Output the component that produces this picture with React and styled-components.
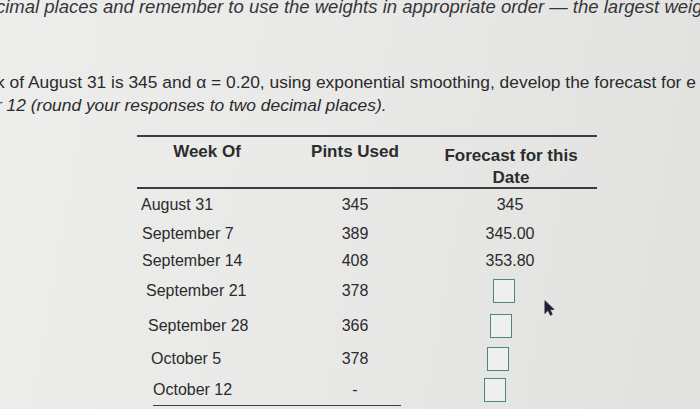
import styled, { createGlobalStyle } from 'styled-components';

const GlobalStyle = createGlobalStyle`
  html, body {
    margin: 0;
    padding: 0;
    width: 700px;
    height: 409px;
    overflow: hidden;
  }
  body {
    font-family: "Liberation Sans", Arial, sans-serif;
    color: #2a2b2d;
  }
`;

const rows = [
  { week: 'August 31', pints: '345', forecast: '345', h: 31, indent: 4 },
  { week: 'September 7', pints: '389', forecast: '345.00', h: 28, indent: 5 },
  { week: 'September 14', pints: '408', forecast: '353.80', h: 25, indent: 5 },
  { week: 'September 21', pints: '378', box: 0, h: 35, indent: 9 },
  { week: 'September 28', pints: '366', box: -3, h: 35, indent: 11 },
  { week: 'October 5', pints: '378', box: -6, h: 32, indent: 14 },
  { week: 'October 12', pints: '-', box: -9, h: 30, indent: 16 },
];

const App = () => {
  return (
    <>
      <GlobalStyle />
      <Page>
        <TopLine>cimal places and remember to use the weights in appropriate order — the largest weigh</TopLine>
        <Question>
          <Line>k of August 31 is 345 and α = 0.20, using exponential smoothing, develop the forecast for e</Line>
          <Line italic>r 12 (round your responses to two decimal places).</Line>
        </Question>

        <Table>
          <HeadRow>
            <HeadCell>Week Of</HeadCell>
            <HeadCell>Pints Used</HeadCell>
            <HeadCell wide>Forecast for this<br />Date</HeadCell>
          </HeadRow>
          {rows.map((r) => (
            <Row key={r.week} h={r.h}>
              <WeekCell indent={r.indent}>{r.week}</WeekCell>
              <NumCell>{r.pints}</NumCell>
              <ForecastCell>
                {r.box !== undefined ? <AnswerBox shift={r.box} /> : r.forecast}
              </ForecastCell>
            </Row>
          ))}
          <BottomRule />
          <Cursor viewBox="0 0 12 18" width="11" height="18">
            <path d="M1 1 L1 15 L4.5 11.5 L7 17 L9 16 L6.6 10.6 L11 10.6 Z" fill="#1d2230" stroke="#1d2230" strokeWidth="0.8" strokeLinejoin="round" />
          </Cursor>
        </Table>
      </Page>
    </>
  );
};

export default App;

const Page = styled.div`
  width: 700px;
  height: 409px;
  overflow: hidden;
  background: linear-gradient(100deg, #ededeb 0%, #e9e9e7 45%, #e1e2df 100%);
`;

const TopLine = styled.div`
  font-size: 18.5px;
  font-style: italic;
  white-space: nowrap;
  margin-top: -4px;
  margin-left: -4px;
  line-height: 22px;
  color: #35363a;
`;

const Question = styled.div`
  margin-top: 53px;
  margin-left: -4px;
`;

const Line = styled.div`
  font-size: 17.4px;
  white-space: nowrap;
  line-height: 23px;
  font-style: ${(p) => (p.italic ? 'italic' : 'normal')};
`;

const Table = styled.div`
  position: relative;
  margin-top: 18px;
  margin-left: 137px;
  width: 460px;
  border-top: 2px solid #3c3d3f;
`;

const HeadRow = styled.div`
  display: grid;
  grid-template-columns: 140px 156px 164px;
  padding: 4px 0 0;
  height: 46px;
  border-bottom: 2px solid #3c3d3f;
`;

const HeadCell = styled.div`
  font-size: 17px;
  font-weight: bold;
  line-height: 22px;
  text-align: center;
  padding-top: ${(p) => (p.wide ? '4px' : '0')};
  padding-right: ${(p) => (p.wide ? '8px' : '0')};
  color: #2b2c2e;
`;

const Row = styled.div`
  display: grid;
  grid-template-columns: 140px 156px 164px;
  align-items: center;
  height: ${(p) => p.h}px;
  font-size: 16px;
`;

const WeekCell = styled.div`
  padding-left: ${(p) => p.indent}px;
`;

const NumCell = styled.div`
  text-align: center;
`;

const ForecastCell = styled.div`
  display: flex;
  justify-content: center;
  padding-right: 10px;
`;

const AnswerBox = styled.div`
  width: 20px;
  height: 22px;
  margin-left: ${(p) => p.shift * 2 - 12}px;
  border: 1.5px solid #4d8580;
  background: #eef0ee;
`;

const BottomRule = styled.div`
  margin-left: 16px;
  width: 248px;
  border-top: 1.5px solid #3c3d3f;
`;

const Cursor = styled.svg`
  position: absolute;
  left: 407px;
  top: 162px;
`;
